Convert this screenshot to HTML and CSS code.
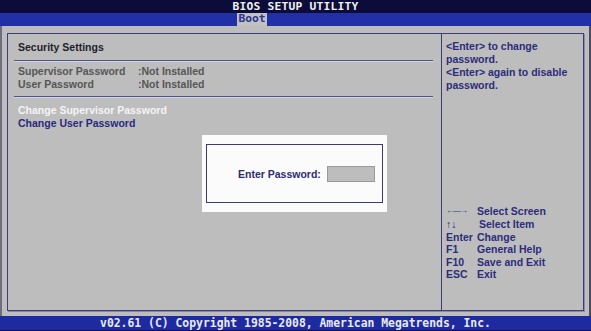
FILE: index.html
```html
<!DOCTYPE html>
<html lang="en">
<head>
    <meta charset="UTF-8">
    <title>BIOS Setup Utility</title>
    <link rel="stylesheet" href="styles.css">
</head>
<body>
    <div class="title-bar">BIOS SETUP UTILITY</div>
    <div class="tab-bar">
        <span class="tab">Boot</span>
    </div>

    <div class="screen">
        <div class="frame">
            <div class="main-panel">
                <div class="section-title">Security Settings</div>
                <hr class="rule">
                <div class="status-row">
                    <span class="label">Supervisor Password</span>
                    <span class="value">:Not Installed</span>
                </div>
                <div class="status-row">
                    <span class="label">User Password</span>
                    <span class="value">:Not Installed</span>
                </div>
                <hr class="rule">
                <div class="option selected">Change Supervisor Password</div>
                <div class="option">Change User Password</div>

                <!-- password prompt sits over the panel -->
                <div class="dialog">
                    <div class="dialog-inner">
                        <span class="prompt">Enter Password:</span>
                        <span class="input"></span>
                    </div>
                </div>
            </div>

            <div class="help-panel">
                <div class="help-text">
                    &lt;Enter&gt; to change<br>
                    password.<br>
                    &lt;Enter&gt; again to disable<br>
                    password.
                </div>
                <div class="keys">
                    <span class="key arrows">&larr;&mdash;&rarr;</span><span>Select Screen</span>
                    <span class="key">&uarr;&darr;</span><span class="nudge">Select Item</span>
                    <span class="key">Enter</span><span>Change</span>
                    <span class="key">F1</span><span>General Help</span>
                    <span class="key">F10</span><span>Save and Exit</span>
                    <span class="key">ESC</span><span>Exit</span>
                </div>
            </div>
        </div>
    </div>

    <div class="footer">v02.61 (C) Copyright 1985-2008, American Megatrends, Inc.</div>
</body>
</html>
```

FILE: styles.css
```css
* {
    box-sizing: border-box;
}
body {
    margin: 0;
    width: 591px;
    height: 331px;
    overflow: hidden;
    display: flex;
    flex-direction: column;
    background: #bdbdbd;
    font-family: "Liberation Sans", Arial, sans-serif;
    font-weight: bold;
    font-size: 10.5px;
    color: #2c2c7c;
}
.title-bar {
    height: 13px;
    line-height: 14px;
    background: #0c0c3a;
    color: #f2f2f2;
    text-align: center;
    font-family: "DejaVu Sans Mono", monospace;
    font-size: 11.3px;
    letter-spacing: 0.2px;
}
.tab-bar {
    height: 13px;
    background: #2230a8;
    display: flex;
    padding-left: 237px;
}
.tab {
    width: 30px;
    height: 13px;
    line-height: 12px;
    background: #c2c2c2;
    color: #2c3490;
    font-family: "DejaVu Sans Mono", monospace;
    font-size: 11.3px;
    text-align: center;
}
.screen {
    flex: 1;
    padding: 7px 5px 5px 5px;
    border-left: 2px solid #6e6e80;
    border-right: 2px solid #4a4a60;
    display: flex;
}
.frame {
    flex: 1;
    display: flex;
    border: 1px solid #3c3c78;
    box-shadow: 1px 1px 0 #8a8aa8;
}
.main-panel {
    position: relative;
    width: 434px;
    border-right: 1px solid #3c3c78;
    padding: 7px 10px 0 10px;
}
.section-title {
    color: #1e1e2e;
    line-height: 13px;
}
.rule {
    margin: 6px -2px 3px -4px;
    border: 0;
    border-top: 1px solid #50508a;
    border-bottom: 1px solid #d6d6de;
}
.status-row {
    display: flex;
    line-height: 13px;
    color: #565656;
}
.label {
    width: 120px;
}
.status-row + .rule {
    margin-top: 5px;
    margin-bottom: 6px;
}
.option {
    line-height: 13px;
    color: #2a2a80;
}
.option.selected {
    color: #f4f4f4;
}
.dialog {
    position: absolute;
    left: 194px;
    top: 101px;
    width: 185px;
    height: 77px;
    padding: 9px 4px 9px 4px;
    background: #fbfbfb;
    display: flex;
}
.dialog-inner {
    flex: 1;
    border: 1px solid #3a3a78;
    display: flex;
    align-items: center;
    padding-left: 31px;
    gap: 6px;
    font-size: 10.5px;
    color: #2c2c70;
}
.input {
    width: 48px;
    height: 16px;
    background: #bdbdbd;
    border: 1px solid #9a9a9a;
}
.help-panel {
    flex: 1;
    display: flex;
    flex-direction: column;
    justify-content: space-between;
    padding: 6px 4px 29px 4px;
    white-space: nowrap;
}
.help-text {
    line-height: 13px;
}
.keys {
    display: grid;
    grid-template-columns: 31px auto;
    line-height: 12.6px;
}
.key.arrows {
    font-weight: normal;
    font-size: 8px;
    letter-spacing: -1px;
}
.nudge {
    padding-left: 2px;
}
.footer {
    height: 15px;
    line-height: 15px;
    background: #1e2aa0;
    color: #eaeaf4;
    text-align: center;
    font-family: "DejaVu Sans Mono", monospace;
    font-size: 11.4px;
    border-bottom: 1px solid #10105a;
}
```
